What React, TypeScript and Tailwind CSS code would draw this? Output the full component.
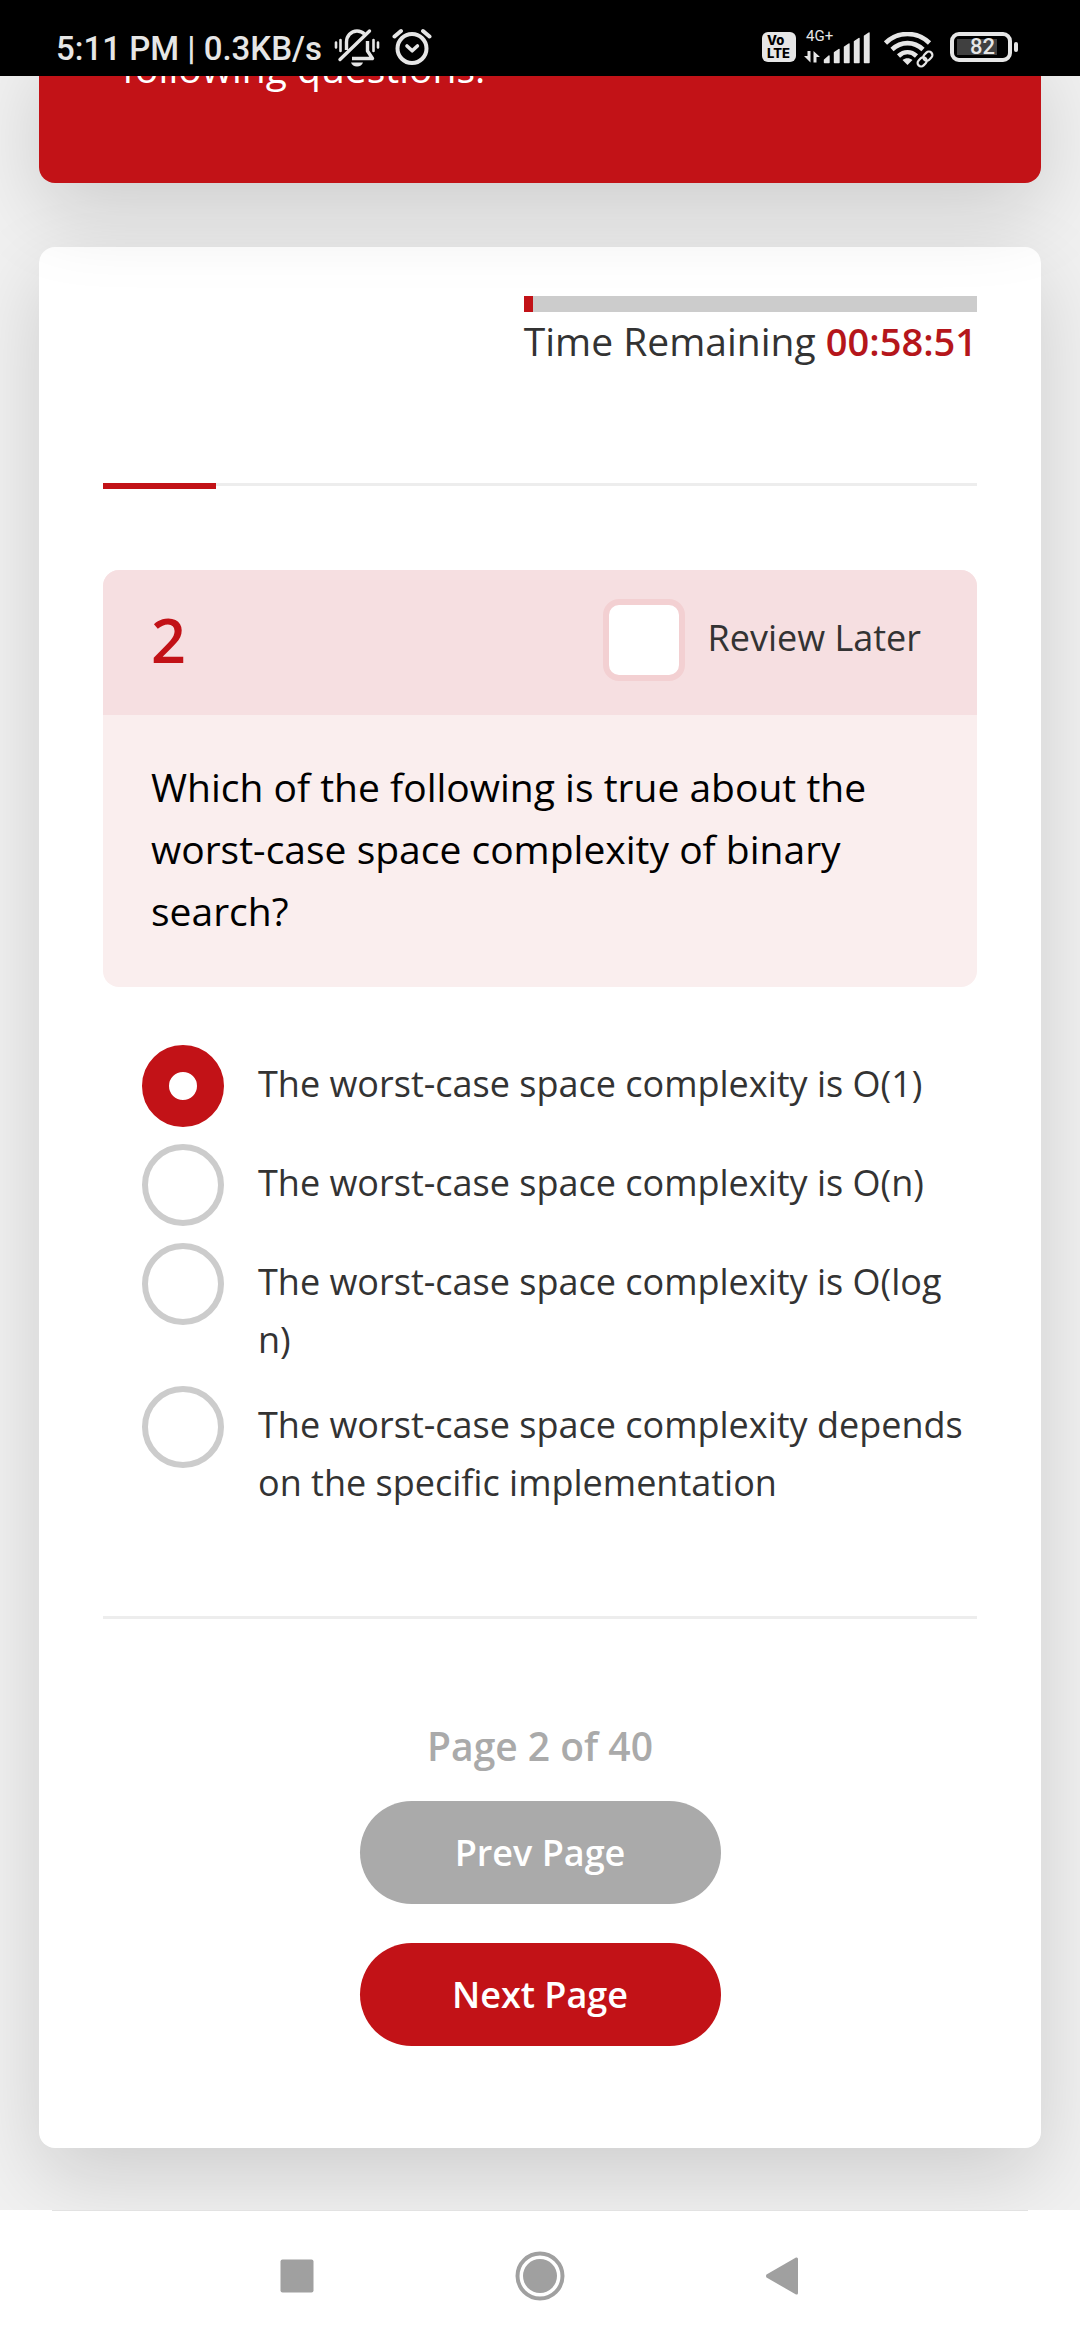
import React, { useState } from "react";

const OPTIONS = [
  "The worst-case space complexity is O(1)",
  "The worst-case space complexity is O(n)",
  "The worst-case space complexity is O(log n)",
  "The worst-case space complexity depends on the specific implementation",
];

function BellOffIcon() {
  return (
    <svg width="46" height="40" viewBox="0 0 46 40" fill="none" stroke="#e6e6e6" aria-hidden="true">
      <path d="M2 14.500v5M6.500 12v11M39.500 12v11M44 14.500v5" strokeWidth="2.600" strokeLinecap="round" />
      <path d="M12.500 22V14c0-6 4.500-11 10.500-11 3 0 5.500 1 7.500 3" strokeWidth="3.400" />
      <path d="M33.500 13v10l5 7.500H18" strokeWidth="3.400" strokeLinejoin="round" />
      <path d="M6 31.500 35.500 3" strokeWidth="3.400" strokeLinecap="round" />
      <path d="M17 34.500h12c-1 2.500-3 4-6 4s-5-1.500-6-4z" fill="#e6e6e6" stroke="none" />
    </svg>
  );
}

function AlarmIcon() {
  return (
    <svg width="40" height="38" viewBox="0 0 40 38" fill="none" stroke="#e6e6e6" strokeLinecap="round" aria-hidden="true">
      <circle cx="20" cy="20.500" r="14.500" strokeWidth="4" />
      <path d="M15 18l5.200 4.800 5.200-4.800" strokeWidth="3.600" strokeLinejoin="round" />
      <path d="M2.500 8.500 9 3M37.500 8.500 31 3" strokeWidth="4" />
    </svg>
  );
}

function SignalIcon() {
  return (
    <svg width="68" height="34" viewBox="0 0 68 34" fill="#e6e6e6" aria-hidden="true">
      <path d="M3.500 19h3v11.500L0 24h3.500zM9.500 30.500V19l6.500 6h-3.500v5.500z" />
      <path
        d="M20.500 30.500v-2.500l4.500-4v6.500zM30.500 30.500V20.500l4.500-3v13zM40.500 30.500V15l4.500-3v18.500zM50.500 30.500V9.500l4.500-3v24zM60.500 30.500V4l4.500-3v29.500z"
        stroke="#e6e6e6"
        strokeWidth="1.400"
        strokeLinejoin="round"
      />
    </svg>
  );
}

function WifiIcon() {
  return (
    <svg width="50" height="36" viewBox="0 0 50 36" fill="none" stroke="#e6e6e6" aria-hidden="true">
      <path d="M1.500 11C14-1 33-1 45.500 11M8 17.500c9-8.500 22-8.500 31 0M14.500 24c5.500-5 12.500-5 18 0" strokeWidth="4.600" />
      <path d="M18.500 28c3-2.500 7-2.500 10 0L23.500 33z" fill="#e6e6e6" stroke="none" />
      <g transform="rotate(-45 41 27)" strokeWidth="2.200">
        <rect x="32" y="23.500" width="10" height="7" rx="3.500" />
        <rect x="40" y="23.500" width="10" height="7" rx="3.500" />
      </g>
    </svg>
  );
}

function StatusBar() {
  return (
    <header className="relative z-10 flex h-[76px] items-start justify-between bg-black pr-[62px] pl-14 font-[Roboto,sans-serif] text-[#e6e6e6]">
      <div className="flex items-start pt-7">
        <span className="text-[33px] leading-[42px] font-medium">5:11 PM | 0.3KB/s</span>
        <div className="flex gap-3 pl-3">
          <BellOffIcon />
          <AlarmIcon />
        </div>
      </div>
      <div className="flex items-start pt-8">
        <div className="flex h-[30px] w-[34px] flex-col justify-center rounded-[6px] bg-[#e6e6e6] pl-[5px] font-[Inter,sans-serif] text-[13px] leading-[13px] font-extrabold text-black">
          <span>Vo</span>
          <span>LTE</span>
        </div>
        <div className="relative ml-2">
          <span className="absolute -top-1 left-0.5 text-[15px] leading-4">4G+</span>
          <SignalIcon />
        </div>
        <div className="ml-3">
          <WifiIcon />
        </div>
        <div className="ml-4 flex items-center gap-0.5">
          <div className="flex h-[30px] w-[62px] items-center rounded-[9px] border-4 border-[#e6e6e6] pl-[3px]">
            <div className="flex h-4 w-10 items-center justify-end bg-[#404040] pr-0.5 text-[22px] leading-none font-medium">82</div>
          </div>
          <div className="h-2.5 w-1 rounded-full bg-[#e6e6e6]" />
        </div>
      </div>
    </header>
  );
}

function NavBar() {
  return (
    <nav className="flex flex-col bg-white px-[52px]">
      <div className="h-px bg-[#e2e2e2]" />
      <div className="flex h-[129px] items-center justify-center gap-[201px]">
        <button type="button" aria-label="Recent apps">
          <svg width="34" height="34" viewBox="0 0 34 34" fill="#a0a0a0">
            <rect x="0.500" y="0.500" width="33" height="33" rx="2" />
          </svg>
        </button>
        <button type="button" aria-label="Home">
          <svg width="50" height="50" viewBox="0 0 50 50" fill="#a0a0a0">
            <circle cx="25" cy="25" r="22.500" fill="none" stroke="#a0a0a0" strokeWidth="4" />
            <circle cx="25" cy="25" r="17" />
          </svg>
        </button>
        <button type="button" aria-label="Back">
          <svg width="34" height="38" viewBox="0 0 34 38" fill="#a0a0a0">
            <path d="M.500 17.500 30 .500q2-.500 2 1.500v34q0 2-2 1.500L.500 20.500q-1-1.500 0-3z" />
          </svg>
        </button>
      </div>
    </nav>
  );
}

export default function App() {
  const [answer, setAnswer] = useState(0);
  return (
    <div className="flex min-h-screen flex-col bg-[#f1f1f1] font-['Open_Sans',sans-serif] text-[#333333]">
      <StatusBar />
      <main className="flex-1 overflow-hidden px-[39px] pb-[62px]">
        <section className="relative -mt-8 h-[139px] rounded-b-2xl bg-[#c21217] px-[83px] text-[39px] leading-[48px] text-white shadow-[0_28px_82px_rgba(0,0,0,0.15)]">
          following questions.
        </section>

        <section className="mt-16 flex flex-col rounded-2xl bg-white px-16 pt-[49px] pb-[102px] shadow-[0_28px_82px_rgba(0,0,0,0.15)]">
          <div className="flex flex-col self-end">
            <div className="h-4 bg-[#cccccc]">
              <div className="h-full w-[9px] bg-[#c21217]" />
            </div>
            <p className="text-[39px] leading-[58px]">
              Time Remaining <span className="text-[38px] font-semibold text-[#b5161b]">00:58:51</span>
            </p>
          </div>

          <div className="mt-[113px] flex h-1.5 items-start">
            <div className="h-1.5 w-[113px] bg-[#c21217]" />
            <div className="h-[3px] flex-1 bg-[#ededed]" />
          </div>

          <article className="mt-[81px] overflow-hidden rounded-2xl bg-[#faeeee]">
            <div className="flex h-[145px] items-center justify-between bg-[#f6dfe1] pr-14 pb-1.5 pl-12">
              <h2 className="text-[61px] leading-none font-semibold text-[#c21217]">2</h2>
              <label className="flex items-center gap-[22px] text-[36px] leading-[58px]">
                <input
                  type="checkbox"
                  className="size-[82px] appearance-none rounded-2xl border-6 border-[#f3d0d2] bg-white checked:bg-[#c21217]"
                />
                <span className="pb-1">Review Later</span>
              </label>
            </div>
            <p className="px-12 pt-[41px] pb-[45px] text-[39px] leading-[62px] text-black">
              Which of the following is true about the worst-case space complexity of binary search?
            </p>
          </article>

          <fieldset className="mt-[58px] pl-[39px]">
            {OPTIONS.map((option, i) => (
              <label key={option} className="mb-[17px] flex items-start gap-[34px]">
                <input
                  type="radio"
                  name="answer"
                  checked={answer === i}
                  onChange={() => setAnswer(i)}
                  className="size-[82px] shrink-0 appearance-none rounded-full border-6 border-[#cccccc] bg-white checked:border-[27px] checked:border-[#c21217]"
                />
                <span className="pt-2.5 text-[36px] leading-[58px]">{option}</span>
              </label>
            ))}
          </fieldset>

          <hr className="mt-[87px] h-[3px] border-0 bg-[#ededed]" />

          <div className="mt-[96px] flex flex-col items-center">
            <p className="text-[39px] leading-[62px] font-semibold text-[#aaaaaa]">Page 2 of 40</p>
            <button type="button" className="mt-6 h-[103px] w-[361px] rounded-full bg-[#aaaaaa] text-[36px] font-semibold text-white">
              Prev Page
            </button>
            <button type="button" className="mt-[39px] h-[103px] w-[361px] rounded-full bg-[#c21217] text-[36px] font-semibold text-white">
              Next Page
            </button>
          </div>
        </section>
      </main>
      <NavBar />
    </div>
  );
}
